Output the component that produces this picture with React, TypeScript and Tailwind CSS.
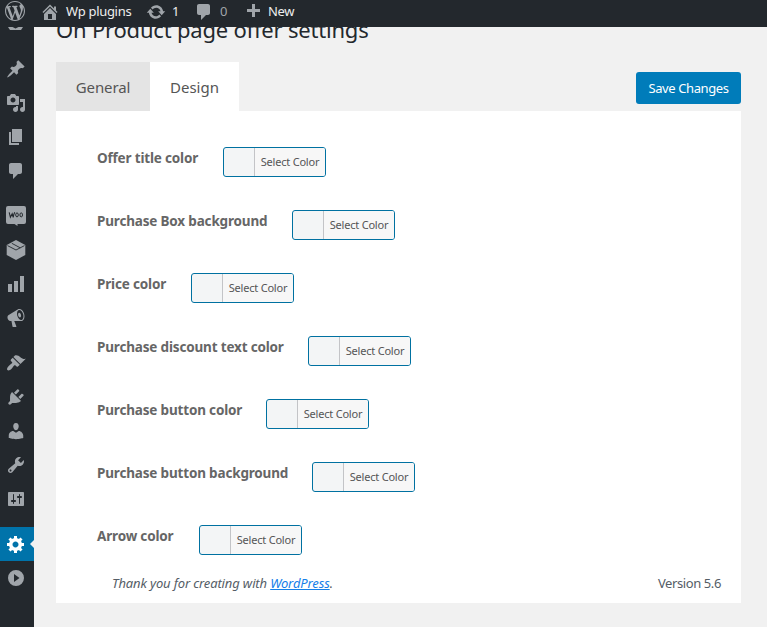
import type { ReactNode } from 'react';

const icons = {
  wordpress:
    'M20 10c0-5.51-4.49-10-10-10C4.48 0 0 4.49 0 10c0 5.52 4.48 10 10 10 5.51 0 10-4.48 10-10zM7.78 15.37L4.37 6.22c.55-.02 1.17-.08 1.17-.08.5-.06.44-1.13-.06-1.11 0 0-1.45.11-2.37.11-.18 0-.37 0-.58-.01C4.12 2.69 6.87 1.11 10 1.11c2.33 0 4.45.87 6.05 2.34-.68-.11-1.65.39-1.65 1.58 0 .74.45 1.36.9 2.1.35.61.55 1.36.55 2.46 0 1.49-1.4 5-1.4 5l-3.03-8.37c.54-.02.82-.17.82-.17.5-.05.44-1.25-.06-1.22 0 0-1.44.12-2.38.12-.87 0-2.33-.12-2.33-.12-.5-.03-.56 1.2-.06 1.22l.92.08 1.26 3.41zM17.41 10c.24-.64.74-1.87.43-4.25.7 1.29 1.05 2.71 1.05 4.25 0 3.29-1.73 6.24-4.4 7.78.97-2.59 1.94-5.2 2.92-7.78zM6.1 18.09C3.12 16.65 1.11 13.53 1.11 10c0-1.3.23-2.48.72-3.59C3.25 10.3 4.67 14.2 6.1 18.09zm4.03-6.63l2.58 6.98c-.86.29-1.76.45-2.71.45-.79 0-1.57-.11-2.29-.33.81-2.38 1.62-4.74 2.42-7.1z',
  home: 'M16 8.5l1.53 1.53-1.06 1.06L10 4.6l-6.47 6.49-1.06-1.06L10 2.5l4 4v-2h2v4zm-6-2.46l6 5.99V18H4v-5.97zM12 17v-5H8v5h4z',
  update:
    'M10.2 3.28c3.53 0 6.43 2.61 6.92 6h2.08l-3.5 4-3.5-4h2.32c-.45-1.97-2.21-3.45-4.32-3.45-1.45 0-2.73.71-3.54 1.78L4.95 5.66C6.23 4.2 8.11 3.28 10.2 3.28zm-.4 13.44c-3.52 0-6.43-2.61-6.92-6H.8l3.5-4c1.17 1.33 2.33 2.67 3.5 4H5.48c.45 1.97 2.21 3.45 4.32 3.45 1.45 0 2.73-.71 3.54-1.78l1.71 1.95c-1.28 1.46-3.15 2.38-5.25 2.38z',
  plus: 'M17 7v3h-5v5H9v-5H4V7h5V2h3v5h5z',
  comment:
    'M5 2h9c1.1 0 2 .9 2 2v7c0 1.1-.9 2-2 2h-2l-5 5v-5H5c-1.1 0-2-.9-2-2V4c0-1.1.9-2 2-2z',
  pin: 'M10.44 3.02l1.82-1.82 6.36 6.35-1.83 1.82c-1.05-.68-2.48-.57-3.41.36l-.75.75c-.92.93-1.04 2.35-.35 3.41l-1.83 1.82-2.41-2.41-2.8 2.79c-.42.42-3.38 2.71-3.8 2.29s1.86-3.39 2.28-3.81l2.79-2.79L4.1 9.36l1.83-1.82c1.05.69 2.48.57 3.4-.36l.75-.75c.93-.92 1.05-2.35.36-3.41z',
  media:
    'M13 11V4c0-.55-.45-1-1-1h-1.67L9 1H5L3.67 3H2c-.55 0-1 .45-1 1v7c0 .55.45 1 1 1h10c.55 0 1-.45 1-1zM7 4.5c1.38 0 2.5 1.12 2.5 2.5S8.38 9.5 7 9.5 4.5 8.38 4.5 7 5.62 4.5 7 4.5zM14 6h5v10.5c0 1.38-1.12 2.5-2.5 2.5S14 17.88 14 16.5s1.12-2.5 2.5-2.5c.17 0 .34.02.5.05V9h-3V6zm-4 8.05V13h2v3.5c0 1.38-1.12 2.5-2.5 2.5S7 17.88 7 16.5 8.12 14 9.5 14c.17 0 .34.02.5.05z',
  page: 'M6 15V2h10v13H6zm-1 1h8v2H3V5h2v11z',
  chart: 'M18 18V2h-4v16h4zm-6 0V7H8v11h4zm-6 0v-8H2v8h4z',
  megaphone:
    'M18.15 5.94c.46 1.62.38 3.22-.02 4.48-.42 1.28-1.26 2.18-2.3 2.48-.16.06-.26.06-.4.06-.06.02-.12.02-.18.02-.06.02-.14.02-.22.02h-6.8l2.22 5.5c.02.14-.06.26-.14.34-.08.1-.24.16-.34.16H6.95c-.1 0-.26-.06-.34-.16-.08-.08-.16-.2-.14-.34l-1-5.5H4.25l-.02-.02c-.5.06-1.08-.18-1.54-.62s-.88-1.08-1.06-1.88c-.24-.8-.2-1.56-.02-2.2.18-.62.58-1.08 1.06-1.3l.02-.02 9-5.4c.1-.06.18-.1.24-.16.06-.04.14-.08.24-.12.16-.08.28-.12.5-.18 1.04-.3 2.24.1 3.22.98s1.84 2.24 2.26 3.86zm-2.58 5.98h-.02c.4-.1.74-.34 1.04-.7.58-.7.86-1.76.86-3.04 0-.64-.1-1.3-.28-1.98-.34-1.36-1.02-2.5-1.78-3.24s-1.68-1.1-2.46-.88c-.82.22-1.4.96-1.7 2-.32 1.04-.28 2.36.06 3.72.38 1.36 1 2.5 1.8 3.24.78.74 1.62 1.1 2.48.88zm-2.54-7.08c.22-.04.42-.02.62.04.38.16.76.48 1.02 1s.42 1.2.42 1.78c0 .3-.04.56-.12.8-.18.48-.44.84-.86.94-.34.1-.8-.06-1.14-.4s-.64-.86-.78-1.5c-.18-.62-.12-1.24.02-1.72s.48-.84.82-.94z',
  appearance:
    'M14.48 11.06L7.41 3.99l1.5-1.5c.5-.56 2.3-.47 3.51.32 1.21.8 1.43 1.28 2.91 2.1 1.18.64 2.45 1.26 4.45.85zm-.71.71L6.7 4.7 4.93 6.47c-.39.39-.39 1.02 0 1.41l1.06 1.06c.39.39.39 1.03 0 1.42-.6.6-1.43 1.11-2.21 1.69-.35.26-.7.53-1.01.84C1.43 14.23.4 16.08 1.4 17.07c.99 1 2.84-.03 4.18-1.36.31-.31.58-.66.85-1.02.57-.78 1.08-1.61 1.69-2.21.39-.39 1.02-.39 1.41 0l1.06 1.06c.39.39 1.02.39 1.41 0z',
  plugins:
    'M13.11 4.36L9.87 7.6 8 5.73l3.24-3.24c.35-.34 1.05-.2 1.56.32.52.51.66 1.21.31 1.55zm-8 1.77l.91-1.12 9.01 9.01-1.19.84c-.71.71-2.63 1.16-3.82 1.16H6.14L4.9 17.26c-.59.59-1.54.59-2.12 0-.59-.58-.59-1.53 0-2.12l1.24-1.24v-3.88c0-1.13.4-3.19 1.09-3.89zm7.26 3.97l3.24-3.24c.34-.35 1.04-.21 1.55.31.52.51.66 1.21.31 1.55l-3.24 3.25z',
  users:
    'M10 9.25c-2.27 0-2.73-3.44-2.73-3.44C7 4.02 7.82 2 9.97 2c2.16 0 2.98 2.02 2.71 3.81 0 0-.41 3.44-2.68 3.44zm0 2.57L12.72 10c2.39 0 4.52 2.33 4.52 4.53v2.49s-3.65 1.13-7.24 1.13c-3.65 0-7.24-1.13-7.24-1.13v-2.49c0-2.25 1.94-4.48 4.47-4.48z',
  tools:
    'M16.68 9.77c-1.34 1.34-3.3 1.67-4.95.99l-5.41 6.52c-.99.99-2.59.99-3.58 0s-.99-2.59 0-3.57l6.52-5.42c-.68-1.65-.35-3.61.99-4.95 1.28-1.28 3.12-1.62 4.72-1.06l-2.89 2.89 2.82 2.82 2.86-2.87c.53 1.58.18 3.39-1.08 4.65zM3.81 16.21c.4.39 1.04.39 1.43 0 .4-.4.4-1.04 0-1.43-.39-.4-1.03-.4-1.43 0-.39.39-.39 1.03 0 1.43z',
  settings:
    'M18 16V4c0-.55-.45-1-1-1H3c-.55 0-1 .45-1 1v12c0 .55.45 1 1 1h14c.55 0 1-.45 1-1zM8 11h1c.55 0 1 .45 1 1s-.45 1-1 1H8v1.5c0 .28-.22.5-.5.5s-.5-.22-.5-.5V13H6c-.55 0-1-.45-1-1s.45-1 1-1h1V5.5c0-.28.22-.5.5-.5s.5.22.5.5V11zm5-2h-1c-.55 0-1-.45-1-1s.45-1 1-1h1V5.5c0-.28.22-.5.5-.5s.5.22.5.5V7h1c.55 0 1 .45 1 1s-.45 1-1 1h-1v5.5c0 .28-.22.5-.5.5s-.5-.22-.5-.5V9z',
  gear: 'M18 12h-2.18c-.17.7-.44 1.35-.81 1.93l1.54 1.54-2.1 2.1-1.54-1.54c-.58.36-1.23.63-1.91.79V19H8v-2.18c-.68-.16-1.33-.43-1.91-.79l-1.54 1.54-2.12-2.12 1.54-1.54c-.36-.58-.63-1.23-.79-1.91H1V9.03h2.17c.16-.7.44-1.35.8-1.94L2.43 5.55l2.1-2.1 1.54 1.54c.58-.37 1.24-.64 1.93-.81V2h3v2.18c.68.16 1.33.43 1.91.79l1.54-1.54 2.12 2.12-1.54 1.54c.36.59.64 1.24.8 1.94H18V12zm-8.5 1.5c1.66 0 3-1.34 3-3s-1.34-3-3-3-3 1.34-3 3 1.34 3 3 3z',
  collapse:
    'M10 2a8 8 0 1 0 0 16 8 8 0 0 0 0-16zM8 6l5.5 4L8 14z',
};

type IconName = keyof typeof icons;

function Icon({ name, className = 'size-5' }: { name: IconName; className?: string }) {
  return (
    <svg viewBox="0 0 20 20" className={`shrink-0 fill-current ${className}`}>
      <path fillRule="evenodd" d={icons[name]} />
    </svg>
  );
}

function WooIcon() {
  return (
    <svg viewBox="0 0 20 20" className="size-5 shrink-0">
      <path
        className="fill-current"
        d="M2 0h16a2 2 0 0 1 2 2v14a2 2 0 0 1-2 2h-6.500v2l-3-2H2a2 2 0 0 1-2-2V2a2 2 0 0 1 2-2z"
      />
      <path
        d="M3.200 6.300l1.200 5 1.800-3.500 1 3.500c.3-2 .8-3.500 1.500-5"
        fill="none"
        stroke="#23282d"
        strokeWidth="1.100"
      />
      <ellipse cx="11" cy="8.900" rx="1.300" ry="2" fill="none" stroke="#23282d" />
      <ellipse cx="15.200" cy="8.900" rx="1.300" ry="2" fill="none" stroke="#23282d" />
    </svg>
  );
}

function BoxIcon() {
  return (
    <svg viewBox="0 0 20 20" className="size-5 shrink-0">
      <path className="fill-current" d="M10 0l9.300 5v10L10 20 .7 15V5z" />
      <path d="M1.500 5.600L10 10l8.500-4.400M5.800 3.300l8.400 4.500" fill="none" stroke="#23282d" strokeWidth=".9" />
    </svg>
  );
}

function MenuItem({ children, active = false }: { children: ReactNode; active?: boolean }) {
  return (
    <div
      className={`relative flex h-[34px] items-center pl-[6px] ${active ? 'bg-[#0073aa] text-white' : 'text-[#a0a5aa]'}`}
    >
      {children}
      {active && (
        <span className="absolute right-0 top-[13px] border-y-4 border-r-4 border-y-transparent border-r-[#f1f1f1]" />
      )}
    </div>
  );
}

function Sidebar() {
  return (
    <aside className="flex w-[34px] shrink-0 flex-col gap-[11px] bg-[#23282d]">
      <div className="flex h-[14px] items-start pl-[5px] text-[#a0a5aa]">
        <svg viewBox="0 0 20 4" className="h-1 w-5 fill-current">
          <path d="M3 0h4.500l3 1.500 3-1.500H18l-2 3H5z" />
        </svg>
      </div>
      <div>
        <MenuItem><Icon name="pin" /></MenuItem>
        <MenuItem><Icon name="media" /></MenuItem>
        <MenuItem><Icon name="page" /></MenuItem>
        <MenuItem><Icon name="comment" /></MenuItem>
      </div>
      <div>
        <MenuItem><WooIcon /></MenuItem>
        <MenuItem><BoxIcon /></MenuItem>
        <MenuItem><Icon name="chart" /></MenuItem>
        <MenuItem><Icon name="megaphone" /></MenuItem>
      </div>
      <div>
        <MenuItem><Icon name="appearance" /></MenuItem>
        <MenuItem><Icon name="plugins" /></MenuItem>
        <MenuItem><Icon name="users" /></MenuItem>
        <MenuItem><Icon name="tools" /></MenuItem>
        <MenuItem><Icon name="settings" /></MenuItem>
      </div>
      <div>
        <MenuItem active><Icon name="gear" /></MenuItem>
        <MenuItem><Icon name="collapse" /></MenuItem>
      </div>
    </aside>
  );
}

function AdminBar() {
  return (
    <header className="flex h-[27px] shrink-0 items-center bg-[#23282d] text-[13px] leading-none text-[#a0a5aa]">
      <div className="flex w-[40px] pb-[5px] pl-[5px]"><Icon name="wordpress" /></div>
      <div className="flex w-[106px] items-center gap-[6px] pb-[4px]">
        <Icon name="home" />
        <span className="whitespace-nowrap tracking-[-0.3px] text-[#eee]">Wp plugins</span>
      </div>
      <div className="flex w-[48px] items-center gap-[6px] pb-[4px]">
        <Icon name="update" />
        <span className="text-[#eee]">1</span>
      </div>
      <div className="flex w-[49px] items-center gap-[6px] pb-[4px]">
        <Icon name="comment" />
        <span>0</span>
      </div>
      <div className="flex items-center gap-[5px] pb-[4px]">
        <Icon name="plus" />
        <span className="tracking-[-0.3px] text-[#eee]">New</span>
      </div>
    </header>
  );
}

const fields = [
  { label: 'Offer title color', width: 'w-[126px]' },
  { label: 'Purchase Box background', width: 'w-[195px]' },
  { label: 'Price color', width: 'w-[94px]' },
  { label: 'Purchase discount text color', width: 'w-[211px]' },
  { label: 'Purchase button color', width: 'w-[169px]' },
  { label: 'Purchase button background', width: 'w-[215px]' },
  { label: 'Arrow color', width: 'w-[102px]' },
];

function ColorField({ label, width }: { label: string; width: string }) {
  return (
    <div className="flex h-[30px]">
      <span
        className={`${width} whitespace-nowrap text-[13.5px] font-bold leading-[23px] tracking-[-0.17px] text-[#666]`}
      >
        {label}
      </span>
      <button className="flex h-[30px] w-[103px] overflow-hidden rounded-[3px] border border-[#0071a1] bg-[#f3f5f6]">
        <span className="h-full w-[31px] border-r border-[#c3c4c7]" />
        <span className="flex-1 whitespace-nowrap bg-[#f7f7f7] text-center text-[11px] leading-[28px] tracking-[-0.2px] text-[#555]">
          Select Color
        </span>
      </button>
    </div>
  );
}

export default function App() {
  return (
    <div className="flex h-[627px] w-[767px] flex-col overflow-hidden bg-[#f1f1f1] font-['Noto_Sans',sans-serif]">
      <AdminBar />
      <div className="flex min-h-0 flex-1">
        <Sidebar />
        <main className="flex w-[707px] flex-col pl-[22px]">
          <h1 className="h-[35px] overflow-hidden whitespace-nowrap text-[22px] leading-[4px] tracking-[-0.2px] text-[#23282d]">
            On Product page offer settings
          </h1>
          <div className="flex h-[49px] items-center">
            <div className="h-full w-[94px] bg-[#e4e4e4] text-center text-[15px] leading-[51px] tracking-[-0.1px] text-[#555]">General</div>
            <div className="h-full w-[89px] bg-white text-center text-[15px] leading-[51px] text-[#555]">Design</div>
            <button className="ml-auto mt-[3px] h-[32px] w-[105px] rounded-[3px] bg-[#007cba] pt-[2px] text-[13px] tracking-[-0.4px] text-white">
              Save Changes
            </button>
          </div>
          <section className="h-[492px] bg-white pl-[41px] pt-[36px]">
            <div className="flex flex-col gap-[33px]">
              {fields.map((field) => (
                <ColorField key={field.label} {...field} />
              ))}
            </div>
            <footer className="flex justify-between pl-[15px] pr-[20px] pt-[18px] text-[13px] leading-[20px] text-[#555d66]">
              <p className="italic tracking-[-0.13px]">
                Thank you for creating with <a className="text-[#1580e8] underline">WordPress</a>.
              </p>
              <p className="tracking-[-0.4px]">Version 5.6</p>
            </footer>
          </section>
        </main>
      </div>
    </div>
  );
}
